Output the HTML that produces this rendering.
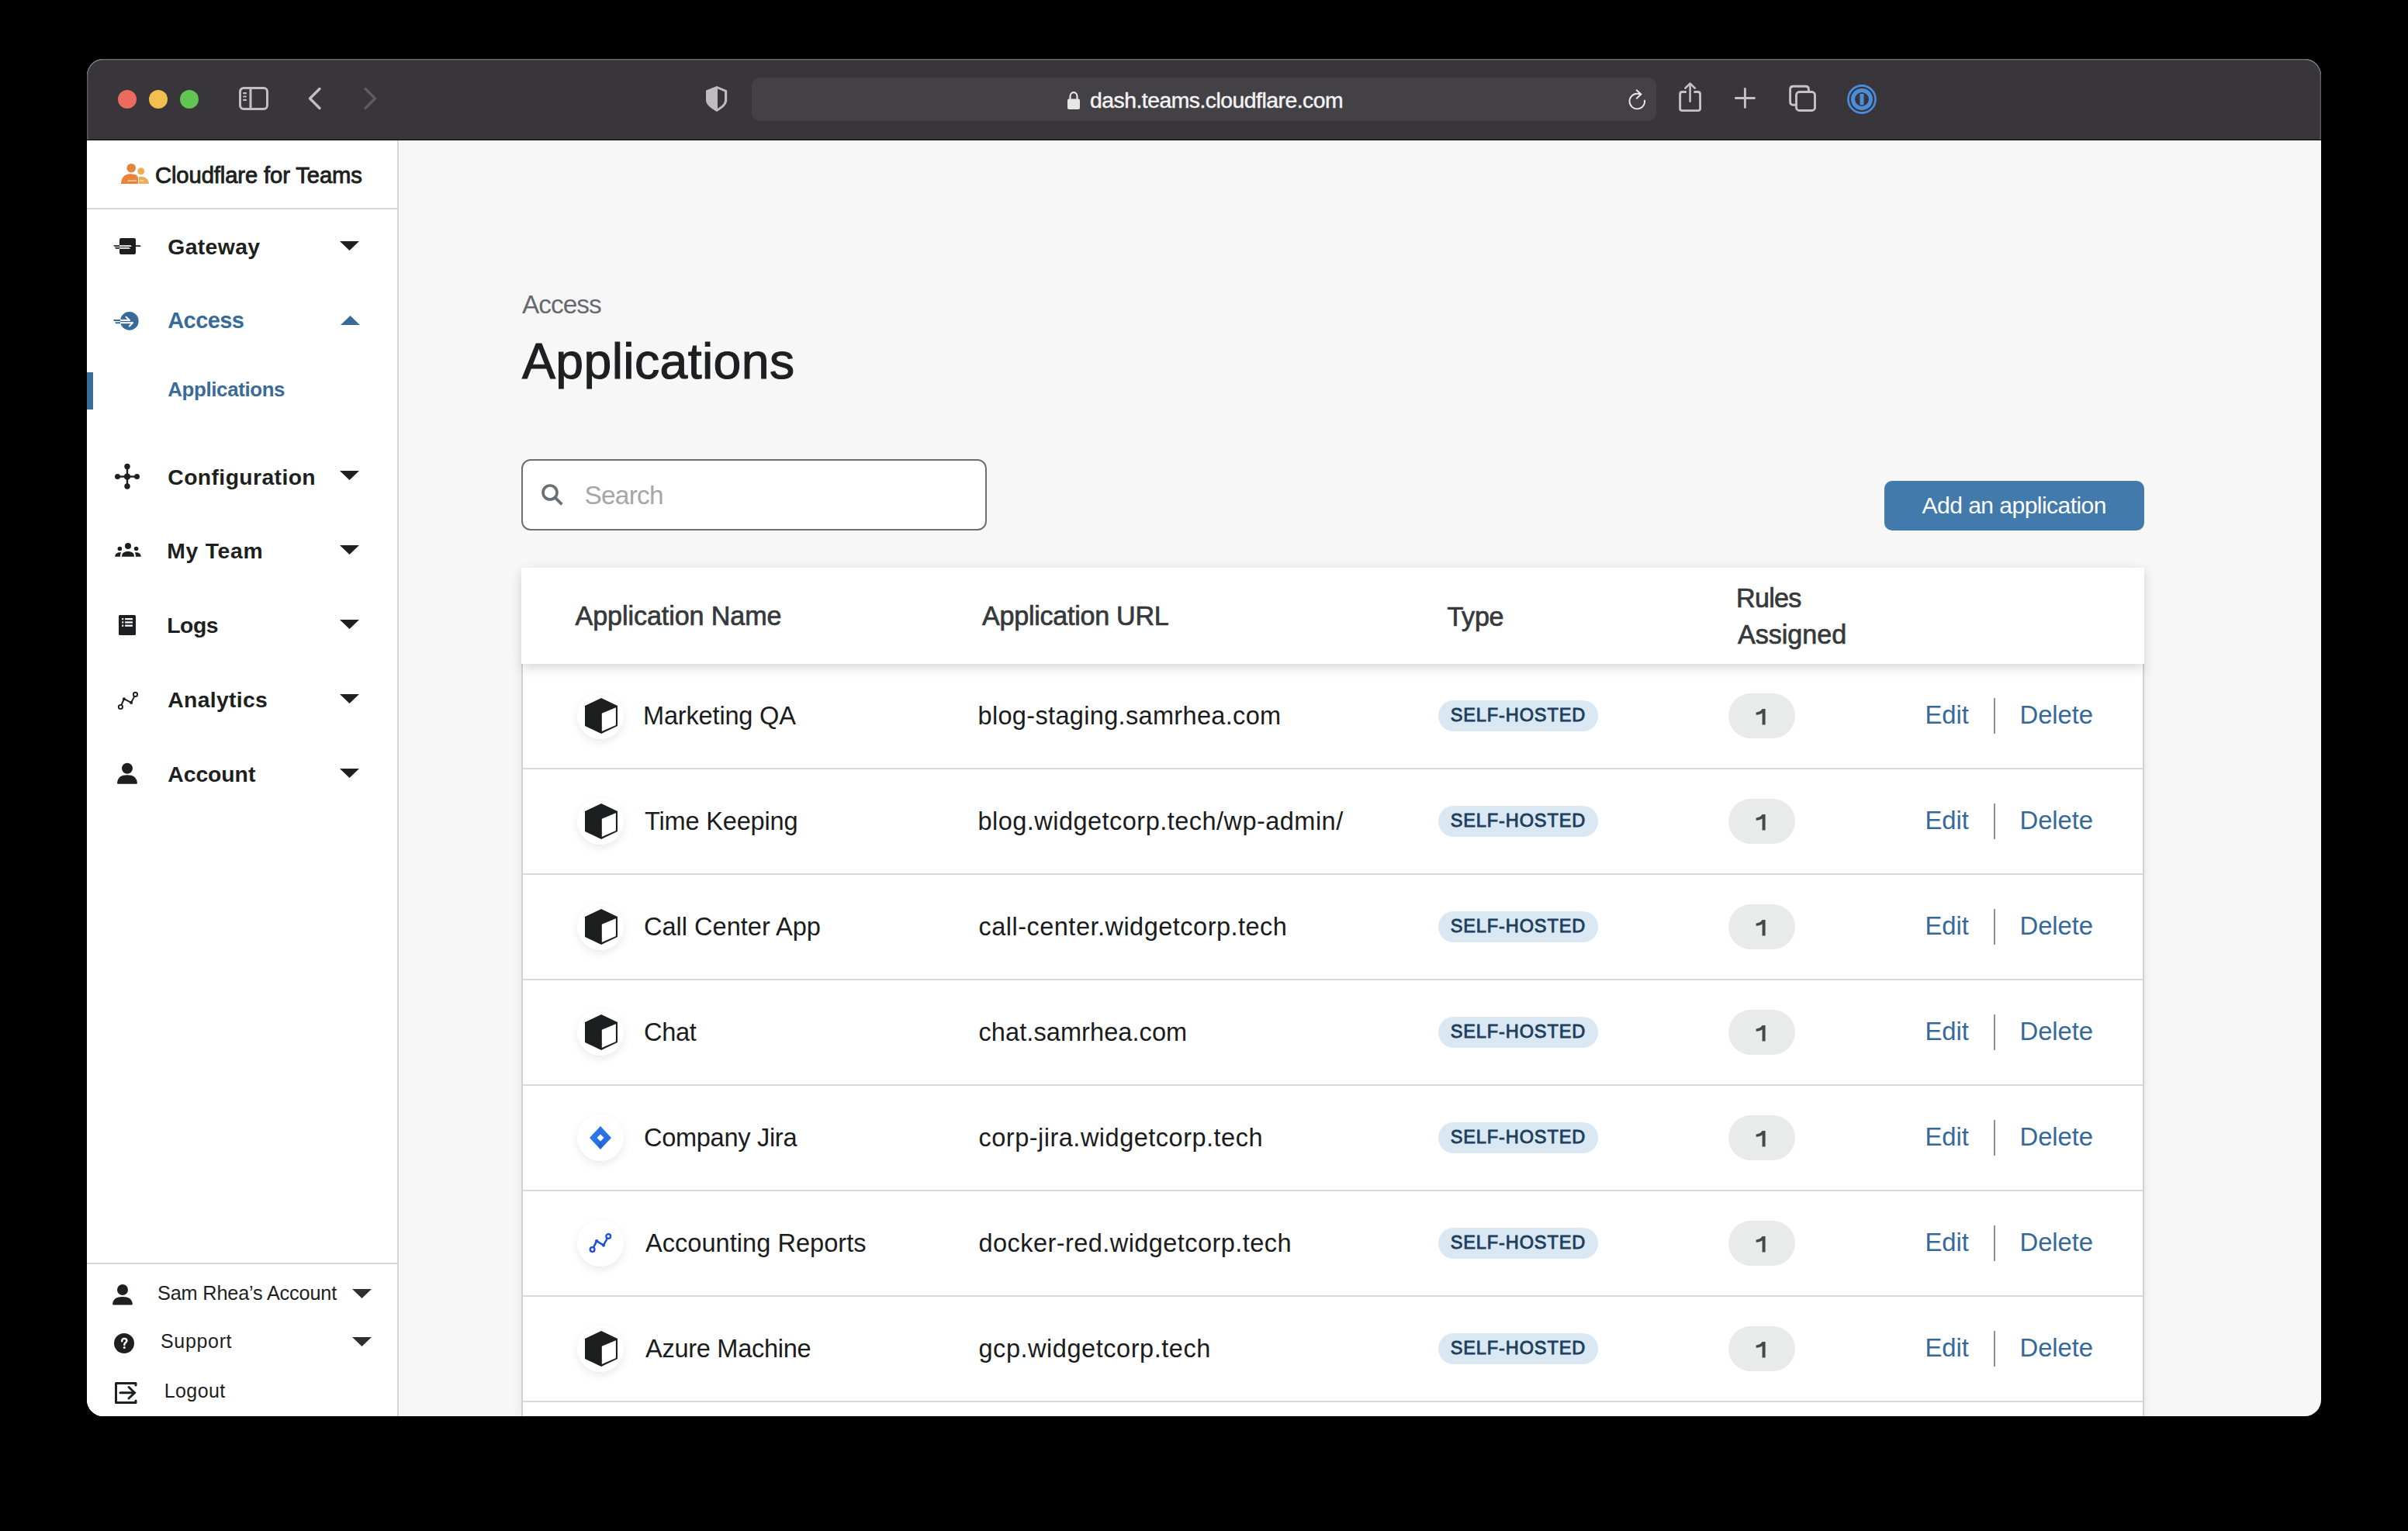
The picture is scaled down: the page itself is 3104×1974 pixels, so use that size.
<!DOCTYPE html>
<html><head><meta charset="utf-8"><style>
html,body{margin:0;padding:0;}
body{width:3104px;height:1974px;background:#000;position:relative;overflow:hidden;font-family:"Liberation Sans",sans-serif;}
.a{position:absolute;}
.t{position:absolute;line-height:1;white-space:nowrap;}
#win{position:absolute;left:112px;top:76px;width:2880px;height:1750px;border-radius:21px;overflow:hidden;background:#f7f7f7;}
.icirc{width:60px;height:60px;border-radius:50%;background:#fff;box-shadow:0 4px 12px rgba(0,0,0,0.085);}
.badge{width:206px;height:40px;border-radius:20px;background:#d9e8f3;}
.pill{width:86px;height:58px;border-radius:29px;background:#e9eaea;}
</style></head><body>
<div id="win">
 <div class="a" style="left:0;top:0;width:2880px;height:104px;background:#38363a;"></div>
 <div class="a" style="left:0;top:0;width:2880px;height:104px;border-radius:21px 21px 0 0;box-shadow:inset 0 1.5px 0 rgba(255,255,255,0.25), inset 1.5px 0 0 rgba(255,255,255,0.18), inset -1.5px 0 0 rgba(255,255,255,0.18);"></div>
 <div class="a" style="left:0;top:104px;width:2880px;height:1px;background:#000"></div>
 <div class="a" style="left:402px;top:105px;width:2478px;height:2px;background:#fbfbfb"></div>
 <div class="a" style="left:0;top:105px;width:400px;height:1645px;background:#fff;"></div>
 <div class="a" style="left:400px;top:105px;width:2px;height:1645px;background:#d4d6d9;"></div>
 <div class="a" style="left:0;top:192px;width:400px;height:2px;background:#d8d9da;"></div>
 <div class="a" style="left:0;top:1552px;width:400px;height:2px;background:#d6dadb;"></div>
 <div class="a" style="left:0;top:404px;width:8px;height:48px;background:#3a6d99;"></div>
</div>
<div class="a" style="left:672px;top:732px;width:2092px;height:124px;background:#fff;box-shadow:0 5px 14px rgba(0,0,0,0.16);z-index:2"></div>
<div class="a" style="left:672px;top:856px;width:2092px;height:970px;background:#fff;box-shadow:0 0 14px rgba(0,0,0,0.08);"></div>
<div class="a" style="left:672px;top:856px;width:2px;height:970px;background:#cfd1d3;"></div>
<div class="a" style="left:2762px;top:856px;width:2px;height:970px;background:#cfd1d3;"></div>
<div class="a" style="left:672px;top:592px;width:600px;height:92px;box-sizing:border-box;border:2px solid #6b7075;border-radius:12px;background:#fff"></div>
<svg class="a" style="left:696px;top:622px" width="32" height="32" viewBox="0 0 32 32">
 <circle cx="13" cy="13" r="9" fill="none" stroke="#6b7075" stroke-width="3.6"/>
 <path d="M19.5,19.5 L27,27" stroke="#6b7075" stroke-width="3.8" stroke-linecap="square"/>
</svg>
<div class="a" style="left:2429px;top:620px;width:335px;height:64px;border-radius:10px;background:#427aab"></div>

<div class="a" style="left:152px;top:116px;width:24px;height:24px;border-radius:50%;background:#ec6a5e"></div>
<div class="a" style="left:192px;top:116px;width:24px;height:24px;border-radius:50%;background:#f4bf4f"></div>
<div class="a" style="left:232px;top:116px;width:24px;height:24px;border-radius:50%;background:#61c554"></div>
<svg class="a" style="left:306px;top:110px" width="42" height="34" viewBox="0 0 42 34">
 <rect x="3.5" y="3.5" width="35" height="27" rx="4.5" fill="none" stroke="#c1bfc3" stroke-width="3"/>
 <rect x="15.5" y="3.5" width="3" height="27" fill="#c1bfc3"/>
 <rect x="7" y="9" width="5" height="2.2" rx="1" fill="#c1bfc3"/>
 <rect x="7" y="13.4" width="5" height="2.2" rx="1" fill="#c1bfc3"/>
 <rect x="7" y="17.8" width="5" height="2.2" rx="1" fill="#c1bfc3"/>
</svg>
<svg class="a" style="left:395px;top:110px" width="24" height="34" viewBox="0 0 24 34">
 <polyline points="17,4.5 4.5,17 17,29.5" fill="none" stroke="#c1bfc3" stroke-width="3.4" stroke-linecap="round" stroke-linejoin="round"/>
</svg>
<svg class="a" style="left:466px;top:110px" width="24" height="34" viewBox="0 0 24 34">
 <polyline points="5,4.5 17.5,17 5,29.5" fill="none" stroke="#5e5c60" stroke-width="3.4" stroke-linecap="round" stroke-linejoin="round"/>
</svg>
<svg class="a" style="left:908px;top:109px" width="32" height="37" viewBox="0 0 32 37">
 <path d="M16,2 L28.6,7.2 C29,7.4 29.2,7.8 29.2,8.3 V20 C29.2,26 24,30 16,35 C8,30 2,26 2,20 V8.6 C2,8 2.3,7.5 2.9,7.3 Z" fill="#bebcc0"/>
 <path d="M17,5.5 L26,9.3 V20 C26,24.5 22,27.5 17,31 Z" fill="#38363a"/>
</svg>
<div class="a" style="left:969px;top:100px;width:1166px;height:56px;border-radius:11px;background:#434145"></div>
<svg class="a" style="left:1375px;top:117px" width="18" height="25" viewBox="0 0 18 25">
 <path d="M4.5,11 V7.5 C4.5,4.2 6.5,2.2 9,2.2 C11.5,2.2 13.5,4.2 13.5,7.5 V11" fill="none" stroke="#e6e6e6" stroke-width="2.2"/>
 <rect x="1" y="10.5" width="16" height="13.5" rx="2" fill="#e6e6e6"/>
</svg>
<svg class="a" style="left:2090px;top:100px" width="270" height="50" viewBox="2090 100 270 50">
 <path d="M2110.3,120.8 A9.8,9.8 0 1 0 2119.95,128.9" fill="none" stroke="#e9e9e9" stroke-width="1.9" transform="translate(0,0)"/>
 <path d="M2110.3,120.8 L2114.2,121.2" stroke="#e9e9e9" stroke-width="1.9"/>
 <polyline points="2109.6,116.3 2115.4,121.5 2109.8,126.8" fill="none" stroke="#e9e9e9" stroke-width="1.9" stroke-linecap="round"/>
 <path d="M2173.8,118.55 H2168.5 C2166.5,118.55 2165.65,119.5 2165.65,121.5 V139.7 C2165.65,141.8 2166.6,142.65 2168.7,142.65 H2188.6 C2190.6,142.65 2191.55,141.8 2191.55,139.7 V121.5 C2191.55,119.5 2190.6,118.55 2188.6,118.55 H2183.4" fill="none" stroke="#c4c2c6" stroke-width="2.9"/>
 <path d="M2178.6,108.5 V130.8" stroke="#c4c2c6" stroke-width="2.6" stroke-linecap="round"/>
 <polyline points="2172.3,113.7 2178.6,107.6 2184.9,113.7" fill="none" stroke="#c4c2c6" stroke-width="2.6" stroke-linecap="round" stroke-linejoin="round"/>
 <path d="M2249.4,114.45 V138.55 M2237.35,126.5 H2261.45" stroke="#c4c2c6" stroke-width="2.9" stroke-linecap="round"/>
 <path d="M2315.5,135.2 H2311.6 C2309.2,135.2 2307.6,133.6 2307.6,131.2 V115.2 C2307.6,112.8 2309.2,111.2 2311.6,111.2 H2327.4 C2329.8,111.2 2331.4,112.8 2331.4,115.2 V118.5" fill="none" stroke="#c4c2c6" stroke-width="2.9"/>
 <rect x="2315.5" y="118.5" width="24" height="24" rx="4" fill="none" stroke="#c4c2c6" stroke-width="2.9"/>
</svg>
<svg class="a" style="left:2380px;top:108px" width="40" height="40" viewBox="0 0 40 40">
 <circle cx="20" cy="20" r="17.6" fill="none" stroke="#4a90e2" stroke-width="2.6"/>
 <circle cx="20" cy="20" r="11.5" fill="none" stroke="#4a8fdc" stroke-width="5"/>
 <rect x="17.5" y="13" width="5" height="14.3" fill="#4a8fdc"/>
</svg>


<!-- gateway -->
<svg class="a" style="left:144px;top:304px" width="40" height="26" viewBox="0 0 40 26">
 <polygon points="2,12.2 10,12.2 10,13.9 3.5,13.9" fill="#1d1f20"/>
 <polygon points="3.8,15 10,15 10,16.8 5.3,16.8" fill="#1d1f20"/>
 <rect x="10" y="2.9" width="21" height="21.1" rx="2" fill="#1d1f20"/>
 <polygon points="10,12.2 24.5,12.2 26,13.9 10,13.9" fill="#fff"/>
 <polygon points="10,15 22.5,15 24,16.8 10,16.8" fill="#fff"/>
 <polygon points="31,12.2 36.5,12.2 38,13.9 31,13.9" fill="#1d1f20"/>
</svg>
<!-- access -->
<svg class="a" style="left:144px;top:400px" width="38" height="28" viewBox="0 0 38 28">
 <circle cx="22.85" cy="13.9" r="11.8" fill="#386b99"/>
 <polygon points="2,11.9 11.2,11.9 11.2,13.9 3,13.9" fill="#386b99"/>
 <polygon points="4.2,15.2 11.2,15.2 11.2,17.2 5.2,17.2" fill="#386b99"/>
 <rect x="11" y="11.9" width="12.3" height="2" fill="#fff"/>
 <rect x="11" y="15.2" width="16.3" height="2" fill="#fff"/>
 <path d="M23,13 L18.6,8.8" stroke="#fff" stroke-width="2.1" stroke-linecap="round"/>
 <path d="M27,16.1 L22.8,20.6" stroke="#fff" stroke-width="2.1" stroke-linecap="round"/>
</svg>
<!-- configuration -->
<svg class="a" style="left:146px;top:596px" width="36" height="36" viewBox="0 0 36 36">
 <rect x="4" y="17.3" width="28" height="2.4" fill="#1d1f20"/>
 <rect x="16.8" y="4" width="2.4" height="28" fill="#1d1f20"/>
 <circle cx="18" cy="5.5" r="3.7" fill="#1d1f20"/><circle cx="18" cy="31" r="3.7" fill="#1d1f20"/>
 <circle cx="5.5" cy="18.5" r="3.5" fill="#1d1f20"/><circle cx="30.5" cy="18.5" r="3.5" fill="#1d1f20"/>
 <circle cx="18" cy="18.5" r="4.1" fill="#1d1f20"/>
</svg>
<!-- my team -->
<svg class="a" style="left:146px;top:698px" width="38" height="22" viewBox="0 0 38 22">
 <circle cx="19" cy="6" r="4" fill="#1d1f20"/>
 <path d="M11,19.7 C11,15 13.5,12.9 19,12.9 C24.5,12.9 27,15 27,19.7 Z" fill="#1d1f20"/>
 <circle cx="8.4" cy="9.5" r="2.8" fill="#1d1f20"/>
 <path d="M2.2,19.7 C2.4,16.5 4.5,14.2 8,14.2 H10.2 C9.4,15.6 9,17.5 9,19.7 Z" fill="#1d1f20"/>
 <circle cx="29.6" cy="9.5" r="2.8" fill="#1d1f20"/>
 <path d="M35.8,19.7 C35.6,16.5 33.5,14.2 30,14.2 H27.8 C28.6,15.6 29,17.5 29,19.7 Z" fill="#1d1f20"/>
</svg>
<!-- logs -->
<svg class="a" style="left:152px;top:792px" width="26" height="28" viewBox="0 0 26 28">
 <rect x="1" y="1" width="22" height="26" rx="1.5" fill="#1d1f20"/>
 <rect x="5.2" y="5" width="2" height="2.2" fill="#fff"/><rect x="9.1" y="5" width="9.8" height="2.2" fill="#fff"/>
 <rect x="5.2" y="9.3" width="2" height="2.2" fill="#fff"/><rect x="9.1" y="9.3" width="9.8" height="2.2" fill="#fff"/>
 <rect x="5.2" y="13.6" width="2" height="2.2" fill="#fff"/><rect x="9.1" y="13.6" width="9.8" height="2.2" fill="#fff"/>
</svg>
<!-- analytics -->
<svg class="a" style="left:150px;top:890px" width="30" height="26" viewBox="0 0 30 26">
 <polyline points="5.4,21.5 9.9,11.2 19.1,16 24.5,5.4" fill="none" stroke="#1d1f20" stroke-width="2"/>
 <circle cx="5.4" cy="21.5" r="2.6" fill="#fff" stroke="#1d1f20" stroke-width="1.9"/>
 <circle cx="24.5" cy="5.4" r="2.6" fill="#fff" stroke="#1d1f20" stroke-width="1.9"/>
 <circle cx="9.9" cy="11.2" r="2" fill="#1d1f20"/><circle cx="19.1" cy="16" r="2" fill="#1d1f20"/>
</svg>
<!-- account -->
<svg class="a" style="left:150px;top:983px" width="28" height="29" viewBox="0 0 28 29">
 <circle cx="14" cy="7.8" r="7" fill="#1d1f20"/>
 <path d="M2,27.7 C1,27.7 1,26.5 1.2,25.5 C2.2,19.5 6,16.3 14,16.3 C22,16.3 25.8,19.5 26.8,25.5 C27,26.5 27,27.7 26,27.7 Z" fill="#1d1f20"/>
</svg>
<!-- sam account -->
<svg class="a" style="left:144px;top:1655px" width="30" height="29" viewBox="0 0 30 29">
 <circle cx="14" cy="8" r="7" fill="#1d1f20"/>
 <path d="M2.2,27.5 C1.2,27.5 1,26.6 1.2,25.6 C2.3,19.8 6,17 14,17 C22,17 25.7,19.8 26.8,25.6 C27,26.6 26.8,27.5 25.8,27.5 Z" fill="#1d1f20"/>
</svg>
<!-- support -->
<svg class="a" style="left:146px;top:1718px" width="28" height="28" viewBox="0 0 28 28">
 <circle cx="14" cy="14" r="13" fill="#1d1f20"/>
 <path d="M11.2,11.2 C11.2,9 12.6,7.9 14.2,7.9 C16.2,7.9 17.4,9.2 17.4,10.8 C17.4,12.9 14.3,13.2 14.3,15.6 V16" fill="none" stroke="#fff" stroke-width="2.4" stroke-linecap="round"/><circle cx="14.3" cy="19.6" r="1.5" fill="#fff"/>
</svg>
<!-- logout -->
<svg class="a" style="left:146px;top:1780px" width="32" height="32" viewBox="0 0 32 32">
 <path d="M29,6 V3.5 H3.5 V28.5 H29 V26" fill="none" stroke="#1d1f20" stroke-width="3" stroke-linecap="round" stroke-linejoin="round"/>
 <path d="M9,15.8 H27" stroke="#1d1f20" stroke-width="3" stroke-linecap="round"/>
 <polyline points="20,8.5 27.5,15.8 20,23" fill="none" stroke="#1d1f20" stroke-width="3" stroke-linecap="round"/>
</svg>
<!-- brand logo -->
<svg class="a" style="left:155px;top:210px" width="40" height="29" viewBox="0 0 40 29">
 <circle cx="14.2" cy="6.7" r="5.8" fill="#e7843b"/>
 <circle cx="26.8" cy="10.8" r="4.5" fill="#efac54"/>
 <path d="M1,26.9 C1.3,19.5 5.5,14.3 12.5,14.3 C18,14.3 21,15.5 22.3,17.5 C22.9,18.4 23,19.3 23,20.3 V26.9 Z" fill="#e7843b"/>
 <path d="M24,26.9 V17.8 C24.8,17.7 25.6,17.7 26.5,17.7 C32.5,17.7 36.6,21 37,26.9 Z" fill="#efac54"/>
 <rect x="9.7" y="22.3" width="11.6" height="1.6" fill="#f5c9a3"/>
 <rect x="25" y="22.3" width="5" height="1.6" fill="#f7dbb3"/>
</svg>

<svg class="a" style="left:438px;top:311px" width="25" height="12" viewBox="0 0 25 12"><polygon points="0,0 25,0 12.5,12" fill="#1d1f20"/></svg>
<svg class="a" style="left:438.5px;top:407px" width="25" height="12" viewBox="0 0 25 12"><polygon points="0,12 25,12 12.5,0" fill="#386b99"/></svg>
<svg class="a" style="left:438px;top:607px" width="25" height="12" viewBox="0 0 25 12"><polygon points="0,0 25,0 12.5,12" fill="#1d1f20"/></svg>
<svg class="a" style="left:438px;top:702.5px" width="25" height="12" viewBox="0 0 25 12"><polygon points="0,0 25,0 12.5,12" fill="#1d1f20"/></svg>
<svg class="a" style="left:438px;top:799px" width="25" height="12" viewBox="0 0 25 12"><polygon points="0,0 25,0 12.5,12" fill="#1d1f20"/></svg>
<svg class="a" style="left:438px;top:895px" width="25" height="12" viewBox="0 0 25 12"><polygon points="0,0 25,0 12.5,12" fill="#1d1f20"/></svg>
<svg class="a" style="left:438px;top:991px" width="25" height="12" viewBox="0 0 25 12"><polygon points="0,0 25,0 12.5,12" fill="#1d1f20"/></svg>
<svg class="a" style="left:454px;top:1662px" width="25" height="12" viewBox="0 0 25 12"><polygon points="0,0 25,0 12.5,12" fill="#2d2f31"/></svg>
<svg class="a" style="left:454px;top:1724px" width="25" height="12" viewBox="0 0 25 12"><polygon points="0,0 25,0 12.5,12" fill="#2d2f31"/></svg>
<div style="position:absolute;left:0;top:0;z-index:3">
<div class="a" style="left:674px;top:990px;width:2088px;height:2px;background:#d9dadb"></div>
<div class="a icirc" style="left:744px;top:893px"></div>
<div class="a" style="left:754px;top:900px"><svg width="42" height="46" viewBox="0 0 42 46"><polygon points="21,0 42,10 42,36 21,46 0,36 0,10" fill="#1d1e20"/><polygon points="21.8,19.7 39.9,12.2 39.9,35 21.8,43" fill="#fff"/></svg></div>
<div class="a badge" style="left:1854px;top:903px"></div>
<div class="a pill" style="left:2228px;top:894px"></div>
<svg class="a" style="left:2262px;top:913px;z-index:4" width="16" height="22" viewBox="0 0 16 22"><path d="M9.6,1 H13.6 V21.4 H9.6 V6.2 C8.2,7.6 5.2,8.6 1.6,8.8 V5.6 C5.4,5.2 8.2,3.6 9.6,1 Z" fill="#45494c"/></svg>
<div class="a" style="left:2570px;top:900px;width:2px;height:46px;background:#8c9094"></div>
<div class="a" style="left:674px;top:1126px;width:2088px;height:2px;background:#d9dadb"></div>
<div class="a icirc" style="left:744px;top:1029px"></div>
<div class="a" style="left:754px;top:1036px"><svg width="42" height="46" viewBox="0 0 42 46"><polygon points="21,0 42,10 42,36 21,46 0,36 0,10" fill="#1d1e20"/><polygon points="21.8,19.7 39.9,12.2 39.9,35 21.8,43" fill="#fff"/></svg></div>
<div class="a badge" style="left:1854px;top:1039px"></div>
<div class="a pill" style="left:2228px;top:1030px"></div>
<svg class="a" style="left:2262px;top:1049px;z-index:4" width="16" height="22" viewBox="0 0 16 22"><path d="M9.6,1 H13.6 V21.4 H9.6 V6.2 C8.2,7.6 5.2,8.6 1.6,8.8 V5.6 C5.4,5.2 8.2,3.6 9.6,1 Z" fill="#45494c"/></svg>
<div class="a" style="left:2570px;top:1036px;width:2px;height:46px;background:#8c9094"></div>
<div class="a" style="left:674px;top:1262px;width:2088px;height:2px;background:#d9dadb"></div>
<div class="a icirc" style="left:744px;top:1165px"></div>
<div class="a" style="left:754px;top:1172px"><svg width="42" height="46" viewBox="0 0 42 46"><polygon points="21,0 42,10 42,36 21,46 0,36 0,10" fill="#1d1e20"/><polygon points="21.8,19.7 39.9,12.2 39.9,35 21.8,43" fill="#fff"/></svg></div>
<div class="a badge" style="left:1854px;top:1175px"></div>
<div class="a pill" style="left:2228px;top:1166px"></div>
<svg class="a" style="left:2262px;top:1185px;z-index:4" width="16" height="22" viewBox="0 0 16 22"><path d="M9.6,1 H13.6 V21.4 H9.6 V6.2 C8.2,7.6 5.2,8.6 1.6,8.8 V5.6 C5.4,5.2 8.2,3.6 9.6,1 Z" fill="#45494c"/></svg>
<div class="a" style="left:2570px;top:1172px;width:2px;height:46px;background:#8c9094"></div>
<div class="a" style="left:674px;top:1398px;width:2088px;height:2px;background:#d9dadb"></div>
<div class="a icirc" style="left:744px;top:1301px"></div>
<div class="a" style="left:754px;top:1308px"><svg width="42" height="46" viewBox="0 0 42 46"><polygon points="21,0 42,10 42,36 21,46 0,36 0,10" fill="#1d1e20"/><polygon points="21.8,19.7 39.9,12.2 39.9,35 21.8,43" fill="#fff"/></svg></div>
<div class="a badge" style="left:1854px;top:1311px"></div>
<div class="a pill" style="left:2228px;top:1302px"></div>
<svg class="a" style="left:2262px;top:1321px;z-index:4" width="16" height="22" viewBox="0 0 16 22"><path d="M9.6,1 H13.6 V21.4 H9.6 V6.2 C8.2,7.6 5.2,8.6 1.6,8.8 V5.6 C5.4,5.2 8.2,3.6 9.6,1 Z" fill="#45494c"/></svg>
<div class="a" style="left:2570px;top:1308px;width:2px;height:46px;background:#8c9094"></div>
<div class="a" style="left:674px;top:1534px;width:2088px;height:2px;background:#d9dadb"></div>
<div class="a icirc" style="left:744px;top:1437px"></div>
<div class="a" style="left:760px;top:1452px"><svg width="30" height="30" viewBox="0 0 30 30"><defs><linearGradient id="jg" x1="0" y1="0" x2="1" y2="1"><stop offset="0" stop-color="#2b7ff0"/><stop offset="1" stop-color="#2466d8"/></linearGradient><linearGradient id="jf" x1="0" y1="0" x2="1" y2="0"><stop offset="0" stop-color="#1b56c0" stop-opacity="0.55"/><stop offset="1" stop-color="#2b7ff0" stop-opacity="0"/></linearGradient></defs><polygon points="14,0 28,15 14,30 0,15" fill="url(#jg)"/><polygon points="14,0 17.5,3.7 14.5,10.6 12,8" fill="url(#jf)"/><polygon points="14,30 10.5,26.3 13.5,19.4 16,22" fill="#1b56c0" fill-opacity="0.35"/><polygon points="14,10.5 18.5,15 14,19.5 9.5,15" fill="#fff"/></svg></div>
<div class="a badge" style="left:1854px;top:1447px"></div>
<div class="a pill" style="left:2228px;top:1438px"></div>
<svg class="a" style="left:2262px;top:1457px;z-index:4" width="16" height="22" viewBox="0 0 16 22"><path d="M9.6,1 H13.6 V21.4 H9.6 V6.2 C8.2,7.6 5.2,8.6 1.6,8.8 V5.6 C5.4,5.2 8.2,3.6 9.6,1 Z" fill="#45494c"/></svg>
<div class="a" style="left:2570px;top:1444px;width:2px;height:46px;background:#8c9094"></div>
<div class="a" style="left:674px;top:1670px;width:2088px;height:2px;background:#d9dadb"></div>
<div class="a icirc" style="left:744px;top:1573px"></div>
<div class="a" style="left:759px;top:1589px"><svg width="30" height="28" viewBox="0 0 30 28"><polyline points="4.6,22.1 10.1,11.1 19,16.6 25.2,5" fill="none" stroke="#1f4fd8" stroke-width="2.5"/><circle cx="4.6" cy="22.1" r="2.9" fill="#fff" stroke="#1f4fd8" stroke-width="2.3"/><circle cx="25.2" cy="5" r="2.9" fill="#fff" stroke="#1f4fd8" stroke-width="2.3"/><circle cx="10.1" cy="11.1" r="2.1" fill="#1f4fd8"/><circle cx="19" cy="16.6" r="2.1" fill="#1f4fd8"/></svg></div>
<div class="a badge" style="left:1854px;top:1583px"></div>
<div class="a pill" style="left:2228px;top:1574px"></div>
<svg class="a" style="left:2262px;top:1593px;z-index:4" width="16" height="22" viewBox="0 0 16 22"><path d="M9.6,1 H13.6 V21.4 H9.6 V6.2 C8.2,7.6 5.2,8.6 1.6,8.8 V5.6 C5.4,5.2 8.2,3.6 9.6,1 Z" fill="#45494c"/></svg>
<div class="a" style="left:2570px;top:1580px;width:2px;height:46px;background:#8c9094"></div>
<div class="a" style="left:674px;top:1806px;width:2088px;height:2px;background:#d9dadb"></div>
<div class="a icirc" style="left:744px;top:1709px"></div>
<div class="a" style="left:754px;top:1716px"><svg width="42" height="46" viewBox="0 0 42 46"><polygon points="21,0 42,10 42,36 21,46 0,36 0,10" fill="#1d1e20"/><polygon points="21.8,19.7 39.9,12.2 39.9,35 21.8,43" fill="#fff"/></svg></div>
<div class="a badge" style="left:1854px;top:1719px"></div>
<div class="a pill" style="left:2228px;top:1710px"></div>
<svg class="a" style="left:2262px;top:1729px;z-index:4" width="16" height="22" viewBox="0 0 16 22"><path d="M9.6,1 H13.6 V21.4 H9.6 V6.2 C8.2,7.6 5.2,8.6 1.6,8.8 V5.6 C5.4,5.2 8.2,3.6 9.6,1 Z" fill="#45494c"/></svg>
<div class="a" style="left:2570px;top:1716px;width:2px;height:46px;background:#8c9094"></div>
<div class="t" id="url" style="left:1405.00px;top:115.21px;font-size:28.343px;font-weight:400;letter-spacing:-0.500px;color:#f4f4f4;-webkit-text-stroke:0.45px #f4f4f4;">dash.teams.cloudflare.com</div>
<div class="t" id="brand" style="left:200.00px;top:211.97px;font-size:29.215px;font-weight:400;letter-spacing:-0.105px;color:#1d1f20;-webkit-text-stroke:0.9px #1d1f20;">Cloudflare for Teams</div>
<div class="t" id="nav_gw" style="left:216.30px;top:304.41px;font-size:28.343px;font-weight:700;letter-spacing:0.367px;color:#1d1f20;">Gateway</div>
<div class="t" id="nav_ac" style="left:216.30px;top:399.39px;font-size:29.070px;font-weight:700;letter-spacing:-0.660px;color:#386b99;">Access</div>
<div class="t" id="nav_apps" style="left:216.30px;top:489.90px;font-size:25.872px;font-weight:700;letter-spacing:-0.364px;color:#386b99;">Applications</div>
<div class="t" id="nav_cfg" style="left:216.30px;top:601.31px;font-size:28.343px;font-weight:700;letter-spacing:0.392px;color:#1d1f20;">Configuration</div>
<div class="t" id="nav_team" style="left:215.30px;top:696.41px;font-size:28.343px;font-weight:700;letter-spacing:0.717px;color:#1d1f20;">My Team</div>
<div class="t" id="nav_logs" style="left:215.30px;top:792.01px;font-size:28.343px;font-weight:700;letter-spacing:-0.500px;color:#1d1f20;">Logs</div>
<div class="t" id="nav_an" style="left:216.30px;top:887.71px;font-size:28.343px;font-weight:700;letter-spacing:0.312px;color:#1d1f20;">Analytics</div>
<div class="t" id="nav_acct" style="left:216.30px;top:984.01px;font-size:28.343px;font-weight:700;letter-spacing:-0.050px;color:#1d1f20;">Account</div>
<div class="t" id="sam" style="left:203.00px;top:1654.99px;font-size:25.291px;font-weight:400;letter-spacing:-0.176px;color:#1d1f20;">Sam Rhea’s Account</div>
<div class="t" id="support" style="left:207.00px;top:1716.84px;font-size:25.000px;font-weight:400;letter-spacing:0.667px;color:#1d1f20;">Support</div>
<div class="t" id="logout" style="left:211.75px;top:1780.84px;font-size:25.000px;font-weight:400;letter-spacing:0.390px;color:#1d1f20;">Logout</div>
<div class="t" id="crumb" style="left:673.00px;top:375.70px;font-size:33.430px;font-weight:400;letter-spacing:-1.000px;color:#646a70;">Access</div>
<div class="t" id="title" style="left:673.00px;top:434.09px;font-size:64.390px;font-weight:400;letter-spacing:0.364px;color:#1d1f20;-webkit-text-stroke:1.1px #1d1f20;">Applications</div>
<div class="t" id="search" style="left:753.50px;top:621.70px;font-size:33.430px;font-weight:400;letter-spacing:-0.780px;color:#a6a6a6;">Search</div>
<div class="t" id="addbtn" style="left:2477.60px;top:636.73px;font-size:30.087px;font-weight:400;letter-spacing:-0.565px;color:#ffffff;">Add an application</div>
<div class="t" id="h_name" style="left:741.50px;top:777.39px;font-size:34.157px;font-weight:400;letter-spacing:-0.100px;color:#36393b;-webkit-text-stroke:0.7px #36393b;">Application Name</div>
<div class="t" id="h_url" style="left:1266.00px;top:777.39px;font-size:34.157px;font-weight:400;letter-spacing:-0.286px;color:#36393b;-webkit-text-stroke:0.7px #36393b;">Application URL</div>
<div class="t" id="h_type" style="left:1865.40px;top:778.09px;font-size:34.157px;font-weight:400;letter-spacing:-0.267px;color:#36393b;-webkit-text-stroke:0.7px #36393b;">Type</div>
<div class="t" id="h_rules" style="left:2238.00px;top:753.79px;font-size:34.157px;font-weight:400;letter-spacing:-0.750px;color:#36393b;-webkit-text-stroke:0.7px #36393b;">Rules</div>
<div class="t" id="h_assigned" style="left:2240.00px;top:801.39px;font-size:34.157px;font-weight:400;letter-spacing:-0.043px;color:#36393b;-webkit-text-stroke:0.7px #36393b;">Assigned</div>
<div class="t" id="name0" style="left:829.00px;top:907.44px;font-size:32.558px;font-weight:400;letter-spacing:-0.182px;color:#1b1c1d;">Marketing QA</div>
<div class="t" id="urlc0" style="left:1260.50px;top:907.44px;font-size:32.558px;font-weight:400;letter-spacing:0.313px;color:#1b1c1d;">blog-staging.samrhea.com</div>
<div class="t" id="badge0" style="left:1869.70px;top:910.97px;font-size:23.547px;font-weight:400;letter-spacing:0.880px;color:#1d3d5c;-webkit-text-stroke:0.85px #1d3d5c;">SELF-HOSTED</div>
<div class="t" id="edit0" style="left:2481.50px;top:906.09px;font-size:32.849px;font-weight:400;letter-spacing:-0.033px;color:#36699a;">Edit</div>
<div class="t" id="del0" style="left:2603.60px;top:906.09px;font-size:32.849px;font-weight:400;letter-spacing:-0.120px;color:#36699a;">Delete</div>
<div class="t" id="name1" style="left:831.00px;top:1043.44px;font-size:32.558px;font-weight:400;letter-spacing:-0.182px;color:#1b1c1d;">Time Keeping</div>
<div class="t" id="urlc1" style="left:1260.50px;top:1043.44px;font-size:32.558px;font-weight:400;letter-spacing:0.448px;color:#1b1c1d;">blog.widgetcorp.tech/wp-admin/</div>
<div class="t" id="badge1" style="left:1869.70px;top:1046.97px;font-size:23.547px;font-weight:400;letter-spacing:0.880px;color:#1d3d5c;-webkit-text-stroke:0.85px #1d3d5c;">SELF-HOSTED</div>
<div class="t" id="edit1" style="left:2481.50px;top:1042.09px;font-size:32.849px;font-weight:400;letter-spacing:-0.033px;color:#36699a;">Edit</div>
<div class="t" id="del1" style="left:2603.60px;top:1042.09px;font-size:32.849px;font-weight:400;letter-spacing:-0.120px;color:#36699a;">Delete</div>
<div class="t" id="name2" style="left:830.00px;top:1179.44px;font-size:32.558px;font-weight:400;letter-spacing:0.000px;color:#1b1c1d;">Call Center App</div>
<div class="t" id="urlc2" style="left:1261.50px;top:1179.44px;font-size:32.558px;font-weight:400;letter-spacing:0.465px;color:#1b1c1d;">call-center.widgetcorp.tech</div>
<div class="t" id="badge2" style="left:1869.70px;top:1182.97px;font-size:23.547px;font-weight:400;letter-spacing:0.880px;color:#1d3d5c;-webkit-text-stroke:0.85px #1d3d5c;">SELF-HOSTED</div>
<div class="t" id="edit2" style="left:2481.50px;top:1178.09px;font-size:32.849px;font-weight:400;letter-spacing:-0.033px;color:#36699a;">Edit</div>
<div class="t" id="del2" style="left:2603.60px;top:1178.09px;font-size:32.849px;font-weight:400;letter-spacing:-0.120px;color:#36699a;">Delete</div>
<div class="t" id="name3" style="left:830.00px;top:1315.44px;font-size:32.558px;font-weight:400;letter-spacing:-0.333px;color:#1b1c1d;">Chat</div>
<div class="t" id="urlc3" style="left:1261.50px;top:1315.44px;font-size:32.558px;font-weight:400;letter-spacing:0.067px;color:#1b1c1d;">chat.samrhea.com</div>
<div class="t" id="badge3" style="left:1869.70px;top:1318.97px;font-size:23.547px;font-weight:400;letter-spacing:0.880px;color:#1d3d5c;-webkit-text-stroke:0.85px #1d3d5c;">SELF-HOSTED</div>
<div class="t" id="edit3" style="left:2481.50px;top:1314.09px;font-size:32.849px;font-weight:400;letter-spacing:-0.033px;color:#36699a;">Edit</div>
<div class="t" id="del3" style="left:2603.60px;top:1314.09px;font-size:32.849px;font-weight:400;letter-spacing:-0.120px;color:#36699a;">Delete</div>
<div class="t" id="name4" style="left:830.00px;top:1451.44px;font-size:32.558px;font-weight:400;letter-spacing:-0.300px;color:#1b1c1d;">Company Jira</div>
<div class="t" id="urlc4" style="left:1261.50px;top:1451.44px;font-size:32.558px;font-weight:400;letter-spacing:0.479px;color:#1b1c1d;">corp-jira.widgetcorp.tech</div>
<div class="t" id="badge4" style="left:1869.70px;top:1454.97px;font-size:23.547px;font-weight:400;letter-spacing:0.880px;color:#1d3d5c;-webkit-text-stroke:0.85px #1d3d5c;">SELF-HOSTED</div>
<div class="t" id="edit4" style="left:2481.50px;top:1450.09px;font-size:32.849px;font-weight:400;letter-spacing:-0.033px;color:#36699a;">Edit</div>
<div class="t" id="del4" style="left:2603.60px;top:1450.09px;font-size:32.849px;font-weight:400;letter-spacing:-0.120px;color:#36699a;">Delete</div>
<div class="t" id="name5" style="left:832.00px;top:1587.44px;font-size:32.558px;font-weight:400;letter-spacing:0.029px;color:#1b1c1d;">Accounting Reports</div>
<div class="t" id="urlc5" style="left:1261.50px;top:1587.44px;font-size:32.558px;font-weight:400;letter-spacing:0.420px;color:#1b1c1d;">docker-red.widgetcorp.tech</div>
<div class="t" id="badge5" style="left:1869.70px;top:1590.97px;font-size:23.547px;font-weight:400;letter-spacing:0.880px;color:#1d3d5c;-webkit-text-stroke:0.85px #1d3d5c;">SELF-HOSTED</div>
<div class="t" id="edit5" style="left:2481.50px;top:1586.09px;font-size:32.849px;font-weight:400;letter-spacing:-0.033px;color:#36699a;">Edit</div>
<div class="t" id="del5" style="left:2603.60px;top:1586.09px;font-size:32.849px;font-weight:400;letter-spacing:-0.120px;color:#36699a;">Delete</div>
<div class="t" id="name6" style="left:832.00px;top:1723.44px;font-size:32.558px;font-weight:400;letter-spacing:-0.292px;color:#1b1c1d;">Azure Machine</div>
<div class="t" id="urlc6" style="left:1261.50px;top:1723.44px;font-size:32.558px;font-weight:400;letter-spacing:0.517px;color:#1b1c1d;">gcp.widgetcorp.tech</div>
<div class="t" id="badge6" style="left:1869.70px;top:1726.97px;font-size:23.547px;font-weight:400;letter-spacing:0.880px;color:#1d3d5c;-webkit-text-stroke:0.85px #1d3d5c;">SELF-HOSTED</div>
<div class="t" id="edit6" style="left:2481.50px;top:1722.09px;font-size:32.849px;font-weight:400;letter-spacing:-0.033px;color:#36699a;">Edit</div>
<div class="t" id="del6" style="left:2603.60px;top:1722.09px;font-size:32.849px;font-weight:400;letter-spacing:-0.120px;color:#36699a;">Delete</div>
</div>
<!-- window mask for content overflow at bottom -->
<div class="a" style="left:0;top:1826px;width:3104px;height:148px;background:#000;z-index:5"></div>
</body></html>
